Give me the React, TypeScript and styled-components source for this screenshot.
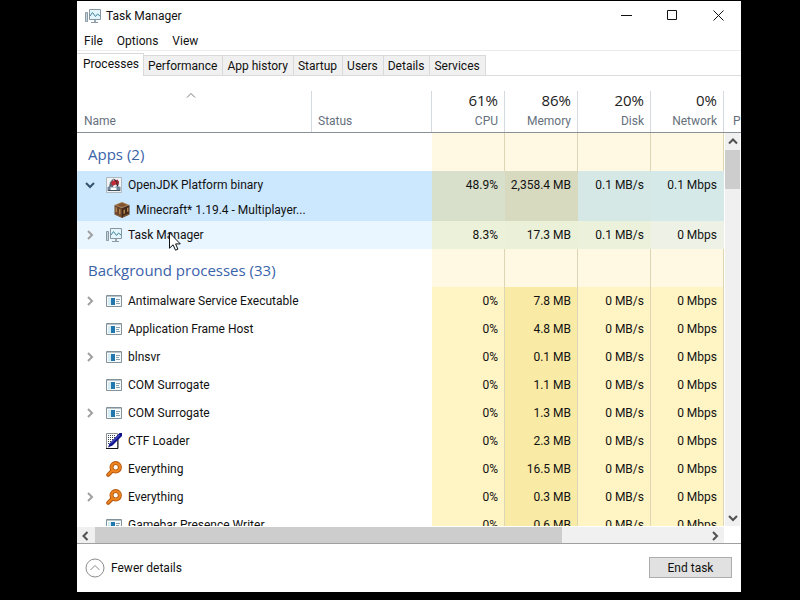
import React from "react";
import styled, { createGlobalStyle, css } from "styled-components";

const GlobalStyle = createGlobalStyle`
  *, *::before, *::after { box-sizing: border-box; }
  body {
    margin: 0;
    background: #000;
    color: #111;
    font: 12px/16px Roboto, "Open Sans", sans-serif;
  }
  button { font: inherit; color: inherit; }
`;

const Desktop = styled.div`
  display: flex;
  height: 100vh;
  padding: 1px 59px 8px 77px;
`;

const Window = styled.main`
  flex: 1;
  min-width: 0;
  display: flex;
  flex-direction: column;
  background: #fff;
`;

const TitleBar = styled.header`
  display: flex;
  align-items: center;
  height: 29px;
  padding-left: 8px;
`;

const Title = styled.h1`
  flex: 1;
  margin: 0 0 0 5px;
  font-size: 12px;
  font-weight: 400;
`;

const CaptionButton = styled.button`
  display: flex;
  align-items: center;
  justify-content: center;
  width: 46px;
  height: 29px;
  padding: 0;
  border: 0;
  background: none;
`;

const MenuBar = styled.nav`
  display: flex;
  align-items: center;
  gap: 14px;
  height: 21px;
  padding: 2px 0 0 7px;
  border-bottom: 1px solid #ececec;
`;

const MenuItem = styled.button`
  padding: 0;
  border: 0;
  background: none;
`;

const TabStrip = styled.div`
  display: flex;
  align-items: flex-end;
  height: 25px;
  border-bottom: 1px solid #dcdcdc;
`;

const Tab = styled.button<{ $active?: boolean }>`
  height: 20px;
  padding: 1px 5px 0 4px;
  border: 1px solid #d9d9d9;
  border-width: 1px 1px 0 0;
  background: #f0f0f0;
  white-space: nowrap;
  ${(p) =>
    p.$active &&
    css`
      height: 23px;
      margin-bottom: -1px;
      padding: 0 4px 3px 6px;
      background: #fff;
    `}
`;

const ListArea = styled.section`
  flex: 1;
  min-height: 0;
  display: grid;
  grid-template-columns: minmax(0, 1fr) 17px;
  grid-template-rows: auto minmax(0, 1fr) 17px;
  border-bottom: 1px solid #a0a0a0;
`;

const ProcessTable = styled.table`
  display: contents;
`;

const TableHead = styled.thead`
  display: block;
  grid-column: 1 / 3;
  padding-top: 15px;
  border-bottom: 1px solid #8a9096;
`;

const TableBody = styled.tbody`
  display: block;
  overflow: hidden;
`;

const columns = "235px minmax(0, 1fr) repeat(4, 73px)";

const HeadRow = styled.tr`
  display: grid;
  grid-template-columns: ${columns} 17px;
  height: 41px;
`;

const HeadCell = styled.th<{ $numeric?: boolean }>`
  display: flex;
  flex-direction: column;
  justify-content: flex-end;
  align-items: ${(p) => (p.$numeric ? "flex-end" : "flex-start")};
  padding: 0 6px 3px;
  border-right: 1px solid #d4dae0;
  color: #66707c;
  font-weight: 400;
  overflow: hidden;
  &:first-child { padding-left: 7px; }
  &:last-child { padding-left: 9px; border: 0; }
`;

const SortMark = styled.span`
  flex: none;
  display: flex;
  align-self: center;
  margin: 0 7px 12px 0;
`;

const Total = styled.span`
  color: #222;
  font-family: "Open Sans", sans-serif;
  font-size: 15px;
  line-height: 20px;
  margin-bottom: 3px;
`;

type Tone = "normal" | "hover" | "selected";

const rowTone = { normal: "#fff", hover: "#e9f5ff", selected: "#cce8ff" };

const Row = styled.tr<{ $tone?: Tone; $height?: number }>`
  display: grid;
  grid-template-columns: ${columns};
  height: ${(p) => p.$height ?? 28}px;
  background: ${(p) => rowTone[p.$tone ?? "normal"]};
`;

const NameCell = styled.td<{ $child?: boolean }>`
  position: relative;
  display: flex;
  align-items: center;
  gap: 6px;
  padding: 0 0 0 ${(p) => (p.$child ? 37 : 5)}px;
  white-space: nowrap;
  svg { flex: none; }
`;

const GroupCell = styled.th`
  grid-column: span 2;
  padding: 10px 11px 0;
  color: #3a62a8;
  font-family: "Open Sans", sans-serif;
  font-size: 15px;
  line-height: 22px;
  font-weight: 400;
  text-align: left;
`;

const StatusCell = styled.td`
  padding: 0;
`;

const HeatCell = styled.td<{ $heat: string; $line: string }>`
  display: flex;
  align-items: center;
  justify-content: flex-end;
  padding: 0 6px 0 0;
  border-right: 1px solid ${(p) => p.$line};
  background: ${(p) => p.$heat};
  white-space: nowrap;
`;

const Expander = styled.button`
  display: flex;
  align-items: center;
  justify-content: center;
  width: 16px;
  height: 16px;
  margin-right: 2px;
  padding: 0;
  border: 0;
  background: none;
`;

const ExpanderSpace = styled.span`
  width: 16px;
  margin-right: 2px;
`;

const Pointer = styled.svg`
  position: absolute;
  left: 92px;
  top: 11px;
  z-index: 1;
`;

const ScrollBar = styled.div<{ $vertical?: boolean }>`
  display: flex;
  flex-direction: ${(p) => (p.$vertical ? "column" : "row")};
  background: #f0f0f0;
  border: 0 solid #fff;
  border-width: ${(p) => (p.$vertical ? "0 1px" : "1px 0 0")};
`;

const ScrollButton = styled.button<{ $wide?: boolean }>`
  flex: none;
  display: flex;
  align-items: center;
  justify-content: center;
  width: ${(p) => (p.$wide ? 18 : 15)}px;
  height: 17px;
  padding: 0;
  border: 0;
  background: none;
`;

const Track = styled.div`
  flex: 1;
`;

const VThumb = styled.div`
  height: 11%;
  background: #cdcdcd;
`;

const HThumb = styled.div`
  width: 76.5%;
  height: 100%;
  background: #cdcdcd;
`;

const Footer = styled.footer`
  display: flex;
  align-items: center;
  justify-content: space-between;
  height: 48px;
  padding: 0 9px 1px 8px;
`;

const DetailsToggle = styled.button`
  display: flex;
  align-items: center;
  gap: 6px;
  padding: 0;
  border: 0;
  background: none;
`;

const EndTask = styled.button`
  width: 83px;
  height: 21px;
  padding: 0;
  border: 1px solid #adadad;
  background: #e1e1e1;
`;

type Direction = "up" | "down" | "left" | "right";
const chevrons: Record<Direction, string> = {
  up: "M1 6.5 5 2.5 9 6.5",
  down: "M1 3 5 7 9 3",
  left: "M6.5 1 2.5 5 6.5 9",
  right: "M3 1 7 5 3 9",
};

const Chevron = ({ to, color = "#505050", weight = 2 }: { to: Direction; color?: string; weight?: number }) => (
  <svg width="10" height="10" viewBox="0 0 10 10" fill="none" stroke={color} strokeWidth={weight} aria-hidden="true">
    <path d={chevrons[to]} />
  </svg>
);

const MonitorIcon = () => (
  <svg width="16" height="16" viewBox="0 0 16 16" aria-hidden="true">
    <path d="M.5 4.500h2v9h-2z" fill="#c9d3da" stroke="#8b9ba6" />
    <path d="M4.500 1.500h11v10h-11z" fill="#e3f5fb" stroke="#8797a2" />
    <path d="M5 8 7.500 4.500l3 4 2-2.500 2.500 2" fill="none" stroke="#3f87a0" />
    <path d="M9 12h2v2H9z" fill="#9aa8b1" />
    <path d="M6 14.500h7" stroke="#8b9ba6" />
  </svg>
);

const JavaIcon = () => (
  <svg width="16" height="16" viewBox="0 0 16 16" aria-hidden="true">
    <path d="M.5.5h15v15H.5z" fill="#f1f3f5" stroke="#b0b8c0" />
    <path d="M6.500 2 4 5.500 3 10h4l1-4z" fill="#5a616c" />
    <path d="M7 1.500 9 5l2.500 5H12l.5-4L10 3z" fill="#2a2d34" />
    <path d="M6 4.500 8.500 3l2 2.500L9.500 8 6.500 8.500 5 6.500z" fill="#c22a38" />
    <path d="M10.500 3 12 5l-.5 2.500" fill="none" stroke="#962733" strokeWidth="2" />
    <path d="M1.500 10 5 9l3 1.500L11 9l3.500 1v4h-13z" fill="#71869a" />
    <path d="M4.500 10.500h6V13h-6z" fill="#fff" />
    <path d="M2 13.500h12" stroke="#3f5062" />
  </svg>
);

const BlockIcon = () => (
  <svg width="16" height="16" viewBox="0 0 16 16" aria-hidden="true">
    <path d="M8 0 15.500 3 8 6 .5 3z" fill="#a87849" />
    <path d="M.5 3 8 6v10L.5 12.500z" fill="#69442a" />
    <path d="M15.500 3 8 6v10l7.500-3.500z" fill="#432a19" />
    <path d="M3 3 8 1l5 2-5 2z" fill="#7d5430" />
    <path d="M1.500 5l1.500.6v5L1.500 10zM5 7l1.500.6v5L5 12zM9.500 8l1.500-.6v4l-1.500.6zM13 6l1.500-.6v4L13 10z" fill="#b08351" />
    <path d="M1 12l6 2.500M9 14.500l6-2.500" stroke="#8b6238" />
  </svg>
);

const AppIcon = () => (
  <svg width="16" height="12" viewBox="0 0 16 12" aria-hidden="true">
    <path d="M.5.5h15v11H.5z" fill="#f7fafb" stroke="#83919a" />
    <path d="M1 1.500h14" stroke="#b7c2c9" />
    <path d="M2 3h3v7H2z" fill="#d6ecf3" />
    <path d="M5 3h4v7H5z" fill="#2277ae" />
    <path d="M10 4.500h4M10 6.500h3M10 8.500h4" stroke="#8ba0ad" />
  </svg>
);

const PenIcon = () => (
  <svg width="16" height="16" viewBox="0 0 16 16" aria-hidden="true">
    <path d="M.5.5h11v15H.5z" fill="#fff" stroke="#8a9094" />
    <path d="M12 5v10.500H0" fill="none" stroke="#111" />
    <path d="M2 2.500h8M2 4.500h8M2 6.500h6M2 8.500h4M2 10.500h2" stroke="#39434b" strokeDasharray="1 1" />
    <path d="M13.500 0H16v3L6.500 12.500 2 14.500l1.500-4z" fill="#10128a" />
    <path d="M13.500 2 5 10.500" stroke="#5c69d8" />
  </svg>
);

const SearchIcon = () => (
  <svg width="16" height="16" viewBox="0 0 16 16" fill="none" aria-hidden="true">
    <path d="M6.500 9.500 2.200 13.800" stroke="#b0540c" strokeWidth="4" strokeLinecap="round" />
    <circle cx="9.700" cy="6.300" r="4.200" stroke="#b0540c" strokeWidth="4" />
    <path d="M6.500 9.500 2.200 13.800" stroke="#ee8420" strokeWidth="2" strokeLinecap="round" />
    <circle cx="9.700" cy="6.300" r="4.200" stroke="#ee8420" strokeWidth="2.400" />
  </svg>
);

const icons = { monitor: MonitorIcon, java: JavaIcon, block: BlockIcon, app: AppIcon, pen: PenIcon, search: SearchIcon };

const groupHeat = "#fff9e4";
const line = "#dcd6b4";
const idleHeat = ["#fff4c4", "#f9eaa5", "#fff4c4", "#fff4c4"];
const hoverHeat = ["#ecf1da", "#ebf0d8", "#ebf1db", "#eef2e6"];
const selectedHeat = ["#d8dfca", "#d7dabf", "#d5e8e6", "#d6e9e9"];
const heatOf = { normal: idleHeat, hover: hoverHeat, selected: selectedHeat };

interface Process {
  name: string;
  icon: keyof typeof icons;
  values?: string[];
  expand?: "right" | "down";
  tone?: Tone;
  pointer?: boolean;
}

const idle = (memory: string) => ["0%", memory, "0 MB/s", "0 Mbps"];

const apps: Process[] = [
  { name: "OpenJDK Platform binary", icon: "java", values: ["48.9%", "2,358.4 MB", "0.1 MB/s", "0.1 Mbps"], expand: "down", tone: "selected" },
  { name: "Minecraft* 1.19.4 - Multiplayer...", icon: "block", tone: "selected" },
  { name: "Task Manager", icon: "monitor", values: ["8.3%", "17.3 MB", "0.1 MB/s", "0 Mbps"], expand: "right", tone: "hover", pointer: true },
];

const background: Process[] = [
  { name: "Antimalware Service Executable", icon: "app", values: idle("7.8 MB"), expand: "right" },
  { name: "Application Frame Host", icon: "app", values: idle("4.8 MB") },
  { name: "blnsvr", icon: "app", values: idle("0.1 MB"), expand: "right" },
  { name: "COM Surrogate", icon: "app", values: idle("1.1 MB") },
  { name: "COM Surrogate", icon: "app", values: idle("1.3 MB"), expand: "right" },
  { name: "CTF Loader", icon: "pen", values: idle("2.3 MB") },
  { name: "Everything", icon: "search", values: idle("16.5 MB") },
  { name: "Everything", icon: "search", values: idle("0.3 MB"), expand: "right" },
  { name: "Gamebar Presence Writer", icon: "app", values: idle("0.6 MB") },
];

const GroupRow = ({ label }: { label: string }) => (
  <Row $height={38}>
    <GroupCell scope="rowgroup">{label}</GroupCell>
    {idleHeat.map((_, i) => (
      <HeatCell key={i} $heat={groupHeat} $line={line} />
    ))}
  </Row>
);

const ProcessRow = ({ name, icon, values, expand, tone = "normal", pointer }: Process) => {
  const Icon = icons[icon];
  const heat = heatOf[tone];
  return (
    <Row $tone={tone} $height={values ? 28 : 22}>
      <NameCell $child={!values}>
        {expand && (
          <Expander aria-label={`Expand ${name}`} aria-expanded={expand === "down"}>
            <Chevron to={expand} color={expand === "down" ? "#34536e" : "#a0a0a0"} />
          </Expander>
        )}
        {values && !expand && <ExpanderSpace />}
        <Icon />
        {name}
        {pointer && (
          <Pointer width="12" height="19" viewBox="0 0 12 19" aria-hidden="true">
            <path d="M.5.8v15.400l3.600-3.400 2.400 5.400 2.400-1-2.300-5.300h4.700z" fill="#fff" stroke="#111" />
          </Pointer>
        )}
      </NameCell>
      <StatusCell />
      {heat.map((color, i) => (
        <HeatCell key={i} $heat={color} $line={tone === "normal" ? line : color}>
          {values?.[i]}
        </HeatCell>
      ))}
    </Row>
  );
};

const totals = [["61%", "CPU"], ["86%", "Memory"], ["20%", "Disk"], ["0%", "Network"]];
const tabs = ["Processes", "Performance", "App history", "Startup", "Users", "Details", "Services"];

export default function App() {
  return (
    <>
      <GlobalStyle />
      <Desktop>
        <Window>
          <TitleBar>
            <MonitorIcon />
            <Title>Task Manager</Title>
            <CaptionButton aria-label="Minimize">
              <svg width="11" height="11" stroke="#111"><path d="M0 5.500h11" /></svg>
            </CaptionButton>
            <CaptionButton aria-label="Maximize">
              <svg width="11" height="11" fill="none" stroke="#111"><path d="M.5.5h9v9h-9z" /></svg>
            </CaptionButton>
            <CaptionButton aria-label="Close">
              <svg width="11" height="11" stroke="#111"><path d="M.5.5l10 10M10.500.5l-10 10" /></svg>
            </CaptionButton>
          </TitleBar>
          <MenuBar aria-label="Menu">
            {["File", "Options", "View"].map((item) => (
              <MenuItem key={item}>{item}</MenuItem>
            ))}
          </MenuBar>
          <TabStrip role="tablist">
            {tabs.map((tab, i) => (
              <Tab key={tab} role="tab" aria-selected={i === 0} $active={i === 0}>{tab}</Tab>
            ))}
          </TabStrip>
          <ListArea>
            <ProcessTable>
              <TableHead>
                <HeadRow>
                  <HeadCell scope="col">
                    <SortMark><Chevron to="up" color="#777" weight={1} /></SortMark>
                    Name
                  </HeadCell>
                  <HeadCell scope="col">Status</HeadCell>
                  {totals.map(([total, label]) => (
                    <HeadCell key={label} scope="col" $numeric>
                      <Total>{total}</Total>
                      {label}
                    </HeadCell>
                  ))}
                  <HeadCell scope="col">P</HeadCell>
                </HeadRow>
              </TableHead>
              <TableBody>
                <GroupRow label="Apps (2)" />
                {apps.map((process) => <ProcessRow key={process.name} {...process} />)}
                <GroupRow label="Background processes (33)" />
                {background.map((process, i) => <ProcessRow key={i} {...process} />)}
              </TableBody>
            </ProcessTable>
            <ScrollBar $vertical>
              <ScrollButton aria-label="Scroll up"><Chevron to="up" /></ScrollButton>
              <Track><VThumb /></Track>
              <ScrollButton aria-label="Scroll down"><Chevron to="down" /></ScrollButton>
            </ScrollBar>
            <ScrollBar>
              <ScrollButton $wide aria-label="Scroll left"><Chevron to="left" /></ScrollButton>
              <Track><HThumb /></Track>
              <ScrollButton $wide aria-label="Scroll right"><Chevron to="right" /></ScrollButton>
            </ScrollBar>
          </ListArea>
          <Footer>
            <DetailsToggle>
              <svg width="20" height="20" viewBox="0 0 20 20" fill="none" stroke="#8d8d8d" aria-hidden="true">
                <circle cx="10" cy="10" r="9" />
                <path d="M5.500 12 10 7.500l4.500 4.500" />
              </svg>
              Fewer details
            </DetailsToggle>
            <EndTask>End task</EndTask>
          </Footer>
        </Window>
      </Desktop>
    </>
  );
}
